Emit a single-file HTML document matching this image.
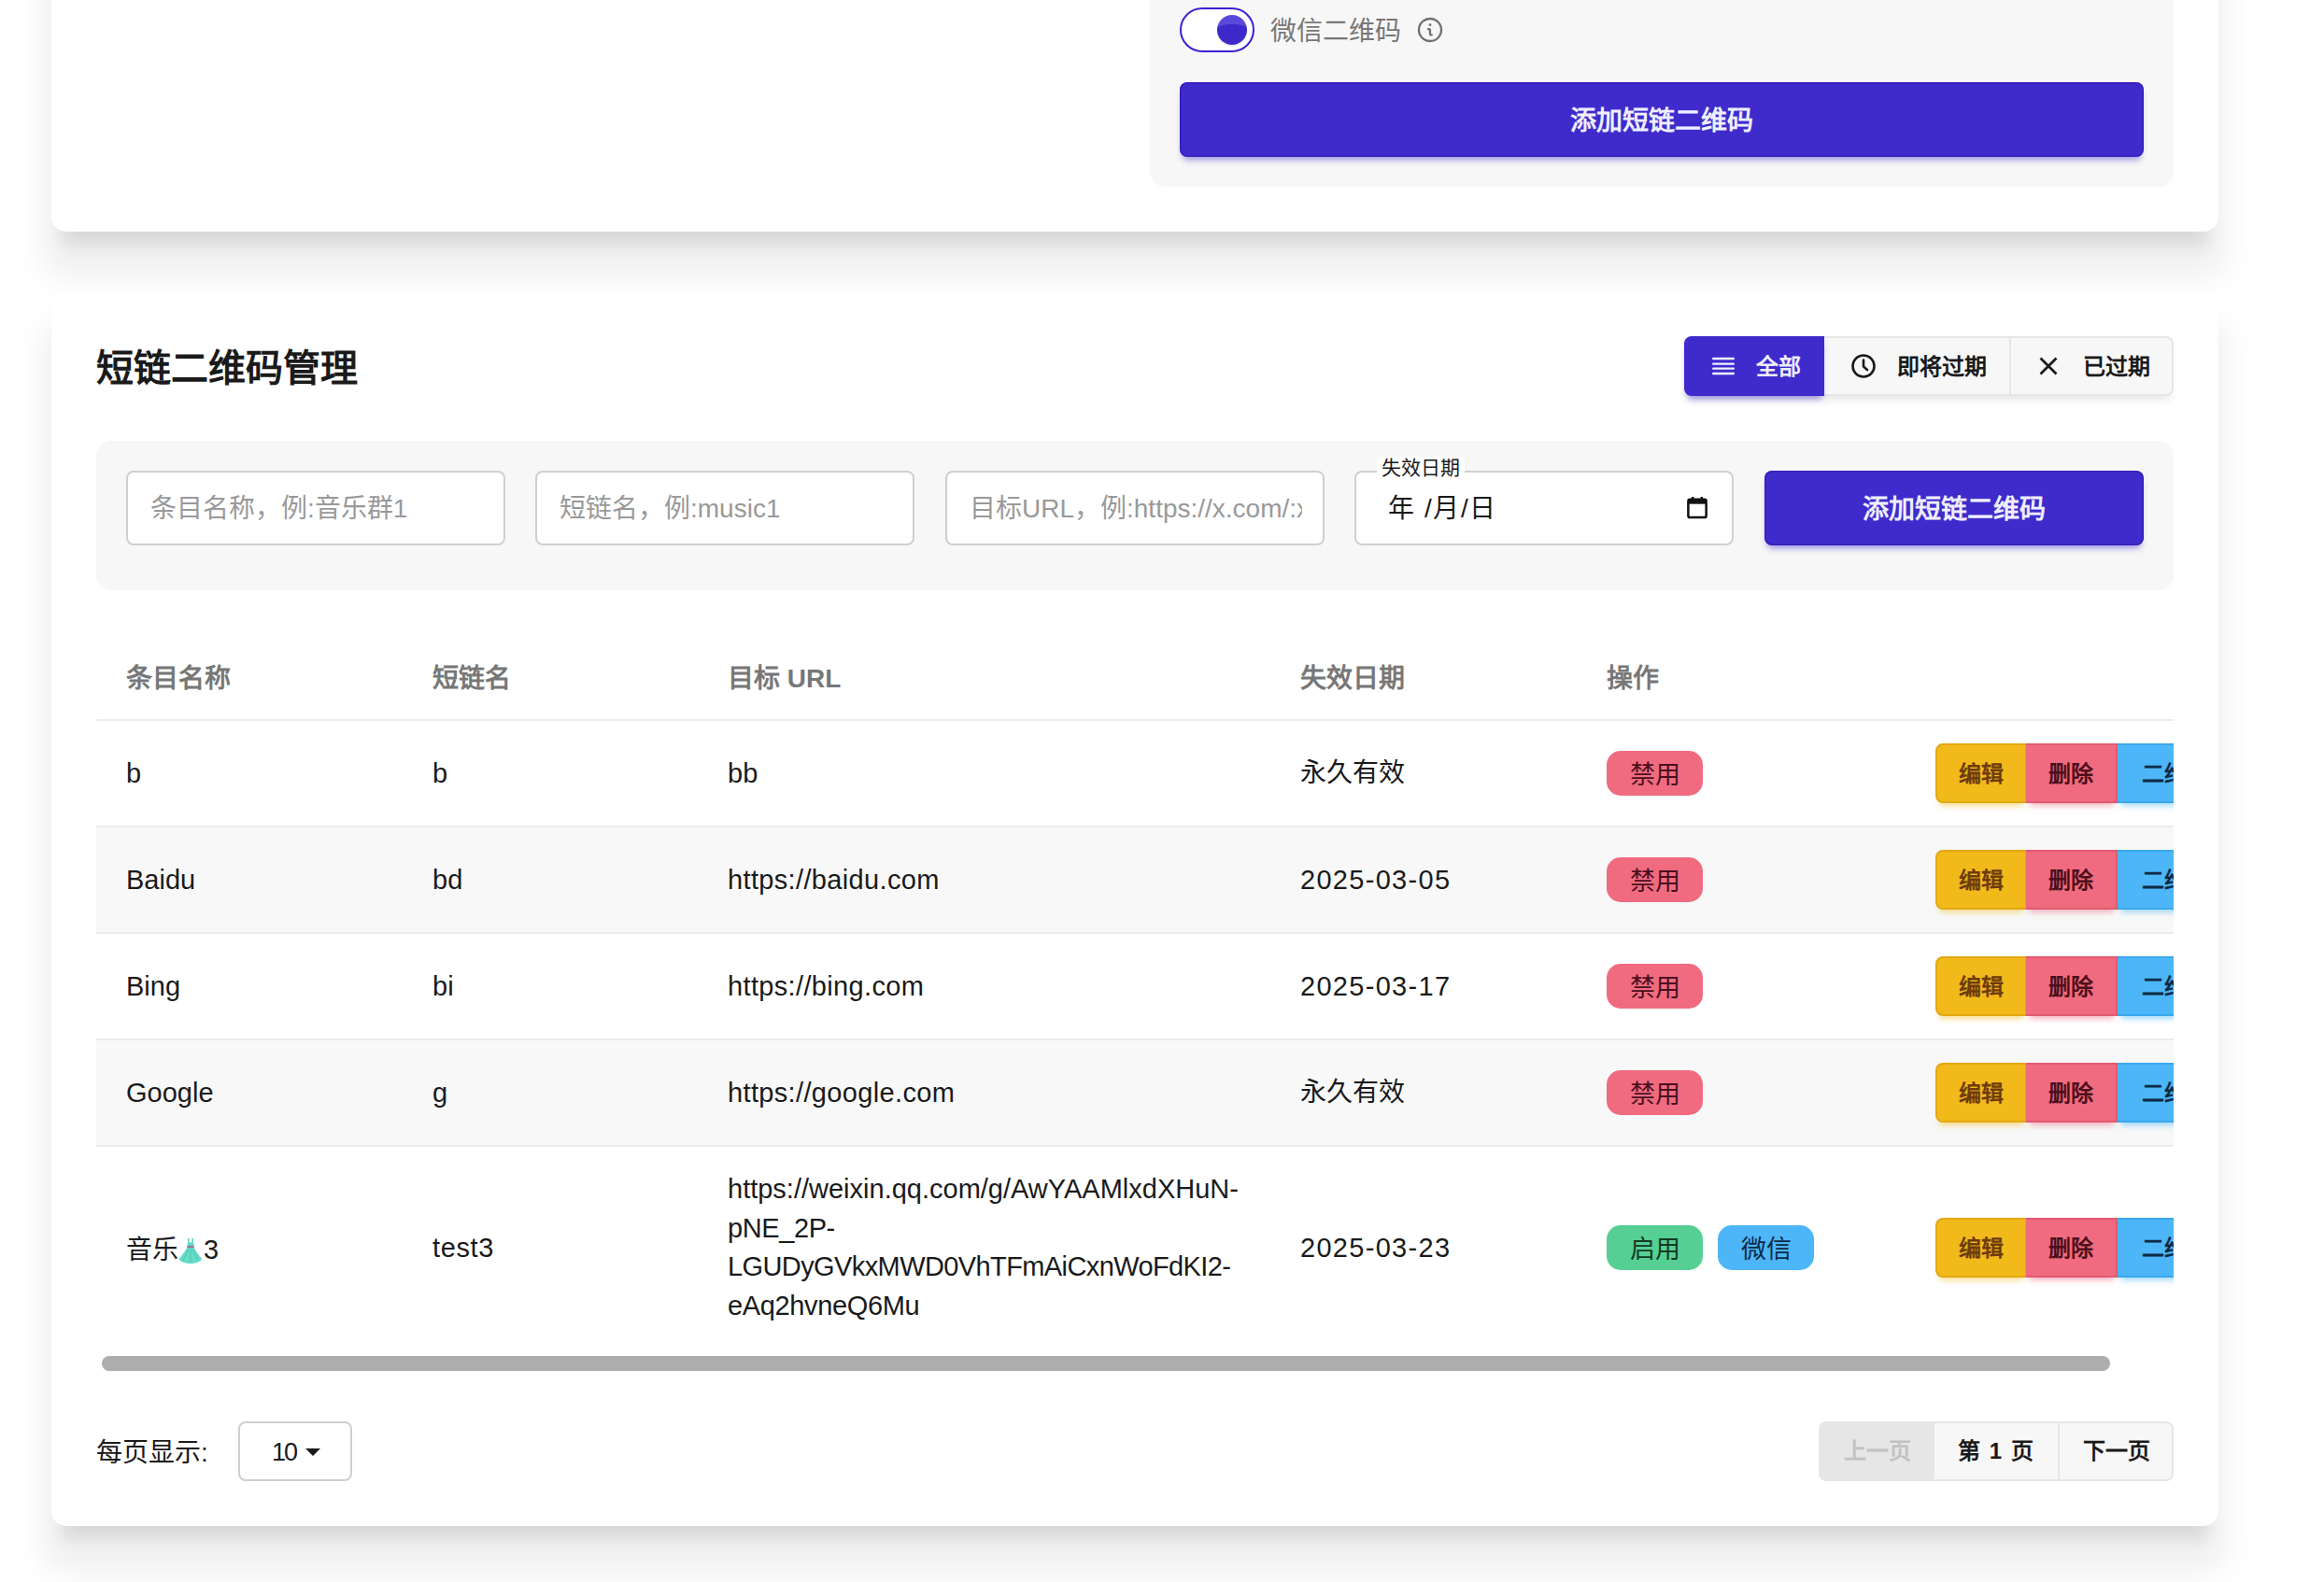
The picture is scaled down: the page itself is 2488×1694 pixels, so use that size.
<!DOCTYPE html>
<html lang="zh-CN"><head><meta charset="utf-8">
<style>
*{box-sizing:border-box;margin:0;padding:0}
html,body{width:2488px;height:1694px;overflow:hidden;background:#fff}
body{position:relative;font-family:"Liberation Sans",sans-serif;color:#1a1a1a}
.abs{position:absolute}
.card{position:absolute;left:55px;width:2320px;background:#fff;border-radius:16px;box-shadow:0 26px 17px -12px rgba(0,0,0,.1),0 40px 32px 11px rgba(0,0,0,.06)}
.panel{position:absolute;background:#f7f7f7;border-radius:16px}
.t{position:absolute;white-space:nowrap}
.btn{position:absolute;background:#3f2bcc;border-radius:8px;color:#eeeeff;font-weight:bold;text-align:center;box-shadow:0 6px 7px -3px rgba(63,43,204,.5),inset 0 0 0 1.5px rgba(30,10,150,.35)}
.inp{position:absolute;top:32px;width:406px;height:80px;background:#fff;border:2px solid #cfcfcf;border-radius:8px}
.ph{position:absolute;left:24px;top:0;line-height:78px;font-size:28px;color:#999;white-space:nowrap;overflow:hidden}
.row{position:absolute;left:0;width:2300px;border-bottom:2px solid #ececec}
.cell{position:absolute;white-space:nowrap;font-size:29px;color:#1a1a1a}
.badge{position:absolute;width:103px;height:48px;border-radius:15px;font-size:27px;text-align:center;line-height:52px}
.act{position:absolute;height:64px;width:98px;font-size:24px;font-weight:bold;text-align:center;line-height:62px}
</style></head><body>

<!-- Card 1 -->
<div class="card" style="top:-300px;height:548px">
  <div class="panel" style="left:1176px;top:0;width:1096px;height:500px">
  </div>
</div>
<!-- toggle etc in page coords -->
<div class="abs" style="left:1263px;top:8px;width:80px;height:48px;border:2.5px solid #3a20d6;border-radius:24px;background:#fff"></div>
<div class="abs" style="left:1303px;top:16px;width:32px;height:32px;border-radius:50%;background:radial-gradient(ellipse 140% 100% at 50% 100%,#3d29c9 68%,#5a49d8 70%);box-shadow:0 1px 2px rgba(0,0,0,.15)"></div>
<div class="t" style="left:1360px;top:14px;font-size:28px;line-height:40px;color:#777">微信二维码</div>
<svg class="abs" style="left:1516px;top:17px" width="30" height="30" viewBox="0 0 30 30"><circle cx="15" cy="15" r="12" fill="none" stroke="#707070" stroke-width="2.3"/><circle cx="15" cy="9.6" r="1.4" fill="#707070"/><path d="M12.9 14.2L15 14.6V19.4q0 1.2 1.8 1" stroke="#707070" stroke-width="2.2" fill="none" stroke-linecap="round" stroke-linejoin="round"/></svg>
<div class="btn" style="left:1263px;top:88px;width:1032px;height:80px;line-height:84px;font-size:28px">添加短链二维码</div>

<!-- Card 2 -->
<div class="card" style="top:312px;height:1322px;background:#fff"></div>

<div class="t" style="left:103px;top:366px;font-size:40px;line-height:56px;font-weight:bold;color:#1a1a1a">短链二维码管理</div>

<!-- tabs -->
<div class="abs" style="left:1803px;top:360px;width:524px;height:64px;border-radius:8px;background:#f7f7f7;border:2px solid #e6e6e6;box-shadow:0 8px 10px -4px rgba(0,0,0,.1)"></div>
<div class="abs" style="left:1803px;top:360px;width:150px;height:64px;border-radius:8px 0 0 8px;background:#3f2bcc;box-shadow:0 6px 7px -3px rgba(63,43,204,.5)"></div>
<div class="abs" style="left:2151px;top:362px;width:2px;height:60px;background:#e6e6e6"></div>


<svg class="abs" style="left:1832px;top:382px" width="26" height="20" viewBox="0 0 26 20"><path d="M2.2 2h21.6M2.2 7.6h21.6M2.2 12.6h21.6M2.2 18h21.6" stroke="#eef0ff" stroke-width="2.4" stroke-linecap="round"/></svg>
<div class="t" style="left:1880px;top:373px;font-size:24px;line-height:40px;font-weight:bold;color:#eeeeff">全部</div>
<svg class="abs" style="left:1981px;top:378px" width="28" height="28" viewBox="0 0 28 28"><circle cx="14" cy="14" r="11.5" fill="none" stroke="#1a1a1a" stroke-width="2.6"/><path d="M14 7.5v7l4 3.5" stroke="#1a1a1a" stroke-width="2.6" fill="none" stroke-linecap="round"/></svg>
<div class="t" style="left:2031px;top:373px;font-size:24px;line-height:40px;font-weight:bold;color:#1a1a1a">即将过期</div>
<svg class="abs" style="left:2182px;top:381px" width="22" height="22" viewBox="0 0 22 22"><path d="M2.5 2.5L19.5 19.5M19.5 2.5L2.5 19.5" stroke="#1a1a1a" stroke-width="2.7"/></svg>
<div class="t" style="left:2230px;top:373px;font-size:24px;line-height:40px;font-weight:bold;color:#1a1a1a">已过期</div>

<!-- filter panel -->
<div class="panel" style="left:103px;top:472px;width:2224px;height:160px">
  <div class="inp" style="left:32px"><div class="ph">条目名称，例:音乐群1</div></div>
  <div class="inp" style="left:470px"><div class="ph">短链名，例:music1</div></div>
  <div class="inp" style="left:909px"><div class="ph" style="width:356px">目标URL，例:https://x.com/:xxx</div></div>
  <div class="inp" style="left:1347px"><div class="ph" style="color:#1a1a1a;font-size:28px;letter-spacing:1.6px;left:34px">年 /月/日</div>
  <svg class="abs" style="left:353px;top:25px" width="24" height="25" viewBox="0 0 24 26"><rect x="2" y="4" width="20" height="20" rx="2" fill="none" stroke="#111" stroke-width="2.6"/><rect x="2" y="4" width="20" height="5" fill="#111"/><path d="M7 1v4M17 1v4" stroke="#111" stroke-width="2.6"/></svg>
  </div>
  <div class="t" style="left:1371px;top:17px;padding:0 5px;height:17px;border-radius:4px 4px 0 0;background:#fff;font-size:21px;line-height:24px;color:#1a1a1a">失效日期</div>
  <div class="btn" style="left:1786px;top:32px;width:406px;height:80px;line-height:84px;font-size:28px">添加短链二维码</div>
</div>

<!-- table -->
<div class="abs" style="left:103px;top:680px;width:2224px;height:780px;overflow:hidden">
  <div class="row" style="top:0;height:92px"></div>
  <div class="row" style="top:92px;height:114px;background:#fff"></div>
  <div class="row" style="top:206px;height:114px;background:#f8f8f8"></div>
  <div class="row" style="top:320px;height:114px;background:#fff"></div>
  <div class="row" style="top:434px;height:114px;background:#f8f8f8"></div>
  <div class="row" style="top:548px;height:220px;background:#fff;border-bottom:0"></div>
  <div class="cell" style="left:32px;top:27px;line-height:40px;font-size:28px;font-weight:bold;color:#777">条目名称</div>
  <div class="cell" style="left:360px;top:27px;line-height:40px;font-size:28px;font-weight:bold;color:#777">短链名</div>
  <div class="cell" style="left:676px;top:27px;line-height:40px;font-size:28px;font-weight:bold;color:#777">目标 URL</div>
  <div class="cell" style="left:1289px;top:27px;line-height:40px;font-size:28px;font-weight:bold;color:#777">失效日期</div>
  <div class="cell" style="left:1617px;top:27px;line-height:40px;font-size:28px;font-weight:bold;color:#777">操作</div>
  <div class="cell" style="left:32px;top:128px;line-height:40px">b</div>
  <div class="cell" style="left:360px;top:128px;line-height:40px">b</div>
  <div class="cell" style="left:676px;top:128px;line-height:40px">bb</div>
  <div class="cell" style="left:1289px;top:128px;line-height:40px;font-size:28px">永久有效</div>
  <div class="badge" style="left:1617px;top:124px;background:#f06b80;color:#4a0f1f">禁用</div>
  <div class="act" style="left:1969px;top:116px;background:#f2b91b;border:2px solid #e3a812;border-radius:8px 0 0 8px;color:#6e3c0c;box-shadow:0 7px 6px -4px rgba(242,185,27,.5)">编辑</div><div class="act" style="left:2066px;top:116px;background:#f06b80;border:2px solid #e25a70;border-left:0;color:#4e0f1c;box-shadow:0 7px 6px -4px rgba(240,107,128,.5)">删除</div><div class="act" style="left:2164px;top:116px;width:120px;background:#4cb6f8;border:2px solid #3aa8ee;border-left:0;color:#0d2a44;box-shadow:0 7px 6px -4px rgba(76,182,248,.5);text-align:left;padding-left:26px">二维码</div>
  <div class="cell" style="left:32px;top:242px;line-height:40px">Baidu</div>
  <div class="cell" style="left:360px;top:242px;line-height:40px">bd</div>
  <div class="cell" style="left:676px;top:242px;line-height:40px;letter-spacing:.35px">https://baidu.com</div>
  <div class="cell" style="left:1289px;top:242px;line-height:40px;letter-spacing:1.3px">2025-03-05</div>
  <div class="badge" style="left:1617px;top:238px;background:#f06b80;color:#4a0f1f">禁用</div>
  <div class="act" style="left:1969px;top:230px;background:#f2b91b;border:2px solid #e3a812;border-radius:8px 0 0 8px;color:#6e3c0c;box-shadow:0 7px 6px -4px rgba(242,185,27,.5)">编辑</div><div class="act" style="left:2066px;top:230px;background:#f06b80;border:2px solid #e25a70;border-left:0;color:#4e0f1c;box-shadow:0 7px 6px -4px rgba(240,107,128,.5)">删除</div><div class="act" style="left:2164px;top:230px;width:120px;background:#4cb6f8;border:2px solid #3aa8ee;border-left:0;color:#0d2a44;box-shadow:0 7px 6px -4px rgba(76,182,248,.5);text-align:left;padding-left:26px">二维码</div>
  <div class="cell" style="left:32px;top:356px;line-height:40px">Bing</div>
  <div class="cell" style="left:360px;top:356px;line-height:40px">bi</div>
  <div class="cell" style="left:676px;top:356px;line-height:40px;letter-spacing:.35px">https://bing.com</div>
  <div class="cell" style="left:1289px;top:356px;line-height:40px;letter-spacing:1.3px">2025-03-17</div>
  <div class="badge" style="left:1617px;top:352px;background:#f06b80;color:#4a0f1f">禁用</div>
  <div class="act" style="left:1969px;top:344px;background:#f2b91b;border:2px solid #e3a812;border-radius:8px 0 0 8px;color:#6e3c0c;box-shadow:0 7px 6px -4px rgba(242,185,27,.5)">编辑</div><div class="act" style="left:2066px;top:344px;background:#f06b80;border:2px solid #e25a70;border-left:0;color:#4e0f1c;box-shadow:0 7px 6px -4px rgba(240,107,128,.5)">删除</div><div class="act" style="left:2164px;top:344px;width:120px;background:#4cb6f8;border:2px solid #3aa8ee;border-left:0;color:#0d2a44;box-shadow:0 7px 6px -4px rgba(76,182,248,.5);text-align:left;padding-left:26px">二维码</div>
  <div class="cell" style="left:32px;top:470px;line-height:40px">Google</div>
  <div class="cell" style="left:360px;top:470px;line-height:40px">g</div>
  <div class="cell" style="left:676px;top:470px;line-height:40px;letter-spacing:.35px">https://google.com</div>
  <div class="cell" style="left:1289px;top:470px;line-height:40px;font-size:28px">永久有效</div>
  <div class="badge" style="left:1617px;top:466px;background:#f06b80;color:#4a0f1f">禁用</div>
  <div class="act" style="left:1969px;top:458px;background:#f2b91b;border:2px solid #e3a812;border-radius:8px 0 0 8px;color:#6e3c0c;box-shadow:0 7px 6px -4px rgba(242,185,27,.5)">编辑</div><div class="act" style="left:2066px;top:458px;background:#f06b80;border:2px solid #e25a70;border-left:0;color:#4e0f1c;box-shadow:0 7px 6px -4px rgba(240,107,128,.5)">删除</div><div class="act" style="left:2164px;top:458px;width:120px;background:#4cb6f8;border:2px solid #3aa8ee;border-left:0;color:#0d2a44;box-shadow:0 7px 6px -4px rgba(76,182,248,.5);text-align:left;padding-left:26px">二维码</div>
  <div class="cell" style="left:32px;top:638px;line-height:40px;font-size:28px">音乐<svg width="24" height="28" viewBox="0 0 24 28" style="vertical-align:-5px;margin:0 2px 0 1px"><path d="M9 1.5q.8-2 1.6 0v4h2.8v-4q.8-2 1.6 0v4.5q1 2 .5 4h-7q-.5-2 .5-4z" fill="#5fd8c6"/><rect x="8.3" y="9.3" width="7.4" height="1.8" fill="#9a6a8a"/><path d="M8.3 11.1h7.4q2 4 7.8 11.2q.8 1.6-.6 2.6q-4.5 3-9 3h-4q-4.5 0-9-3q-1.4-1-.6-2.6q5.8-7.2 8-11.2z" fill="#66dcc8"/><path d="M10 12q-3 6-6 13M12 12v15M14 12q3 6 6 13" stroke="#4cc2ae" stroke-width=".9" fill="none"/></svg><span style="font-size:29px">3</span></div>
  <div class="cell" style="left:360px;top:636px;line-height:40px;letter-spacing:.6px">test3</div>
  <div class="cell" style="left:676px;top:573px;line-height:41.5px">https://weixin.qq.com/g/AwYAAMlxdXHuN-<br><span style="letter-spacing:-.4px">pNE_2P-</span><br><span style="letter-spacing:-.6px">LGUDyGVkxMWD0VhTFmAiCxnWoFdKI2-</span><br><span style="letter-spacing:-.35px">eAq2hvneQ6Mu</span></div>
  <div class="cell" style="left:1289px;top:636px;line-height:40px;letter-spacing:1.3px">2025-03-23</div>
  <div class="badge" style="left:1617px;top:632px;background:#55cf93;color:#123a24">启用</div>
  <div class="badge" style="left:1736px;top:632px;background:#4cb6f8;color:#0d2a44">微信</div>
  <div class="act" style="left:1969px;top:624px;background:#f2b91b;border:2px solid #e3a812;border-radius:8px 0 0 8px;color:#6e3c0c;box-shadow:0 7px 6px -4px rgba(242,185,27,.5)">编辑</div><div class="act" style="left:2066px;top:624px;background:#f06b80;border:2px solid #e25a70;border-left:0;color:#4e0f1c;box-shadow:0 7px 6px -4px rgba(240,107,128,.5)">删除</div><div class="act" style="left:2164px;top:624px;width:120px;background:#4cb6f8;border:2px solid #3aa8ee;border-left:0;color:#0d2a44;box-shadow:0 7px 6px -4px rgba(76,182,248,.5);text-align:left;padding-left:26px">二维码</div>
</div>

<!-- scrollbar -->
<div class="abs" style="left:109px;top:1452px;width:2150px;height:16px;border-radius:8px;background:#adadad"></div>

<!-- footer -->
<div class="t" style="left:103px;top:1536px;font-size:28px;line-height:40px;color:#1a1a1a">每页显示:</div>
<div class="abs" style="left:255px;top:1522px;width:122px;height:64px;border:2px solid #cfcfcf;border-radius:8px;background:#fff"><div class="t" style="left:34px;top:11px;font-size:27px;line-height:40px;letter-spacing:-2px">10</div><svg class="abs" style="left:70px;top:27px" width="16" height="9" viewBox="0 0 16 9"><path d="M0 0h16L8 8z" fill="#1a1a1a"/></svg></div>
<div class="abs" style="left:1947px;top:1522px;width:380px;height:64px;border:2px solid #e6e6e6;border-radius:8px;background:#f7f7f7;overflow:hidden">
  <div class="abs" style="left:0;top:0;width:122px;height:60px;background:#e6e6e6"></div>
  <div class="abs" style="left:254px;top:0;width:2px;height:60px;background:#e6e6e6"></div>
  <div class="t" style="left:25px;top:10px;font-size:24px;line-height:40px;font-weight:bold;color:#c2c2c2">上一页</div>
  <div class="t" style="left:147px;top:10px;font-size:24px;line-height:40px;font-weight:bold;color:#1a1a1a"><span style="word-spacing:3px">第 1 页</span></div>
  <div class="t" style="left:281px;top:10px;font-size:24px;line-height:40px;font-weight:bold;color:#1a1a1a">下一页</div>
</div>

</body></html>
